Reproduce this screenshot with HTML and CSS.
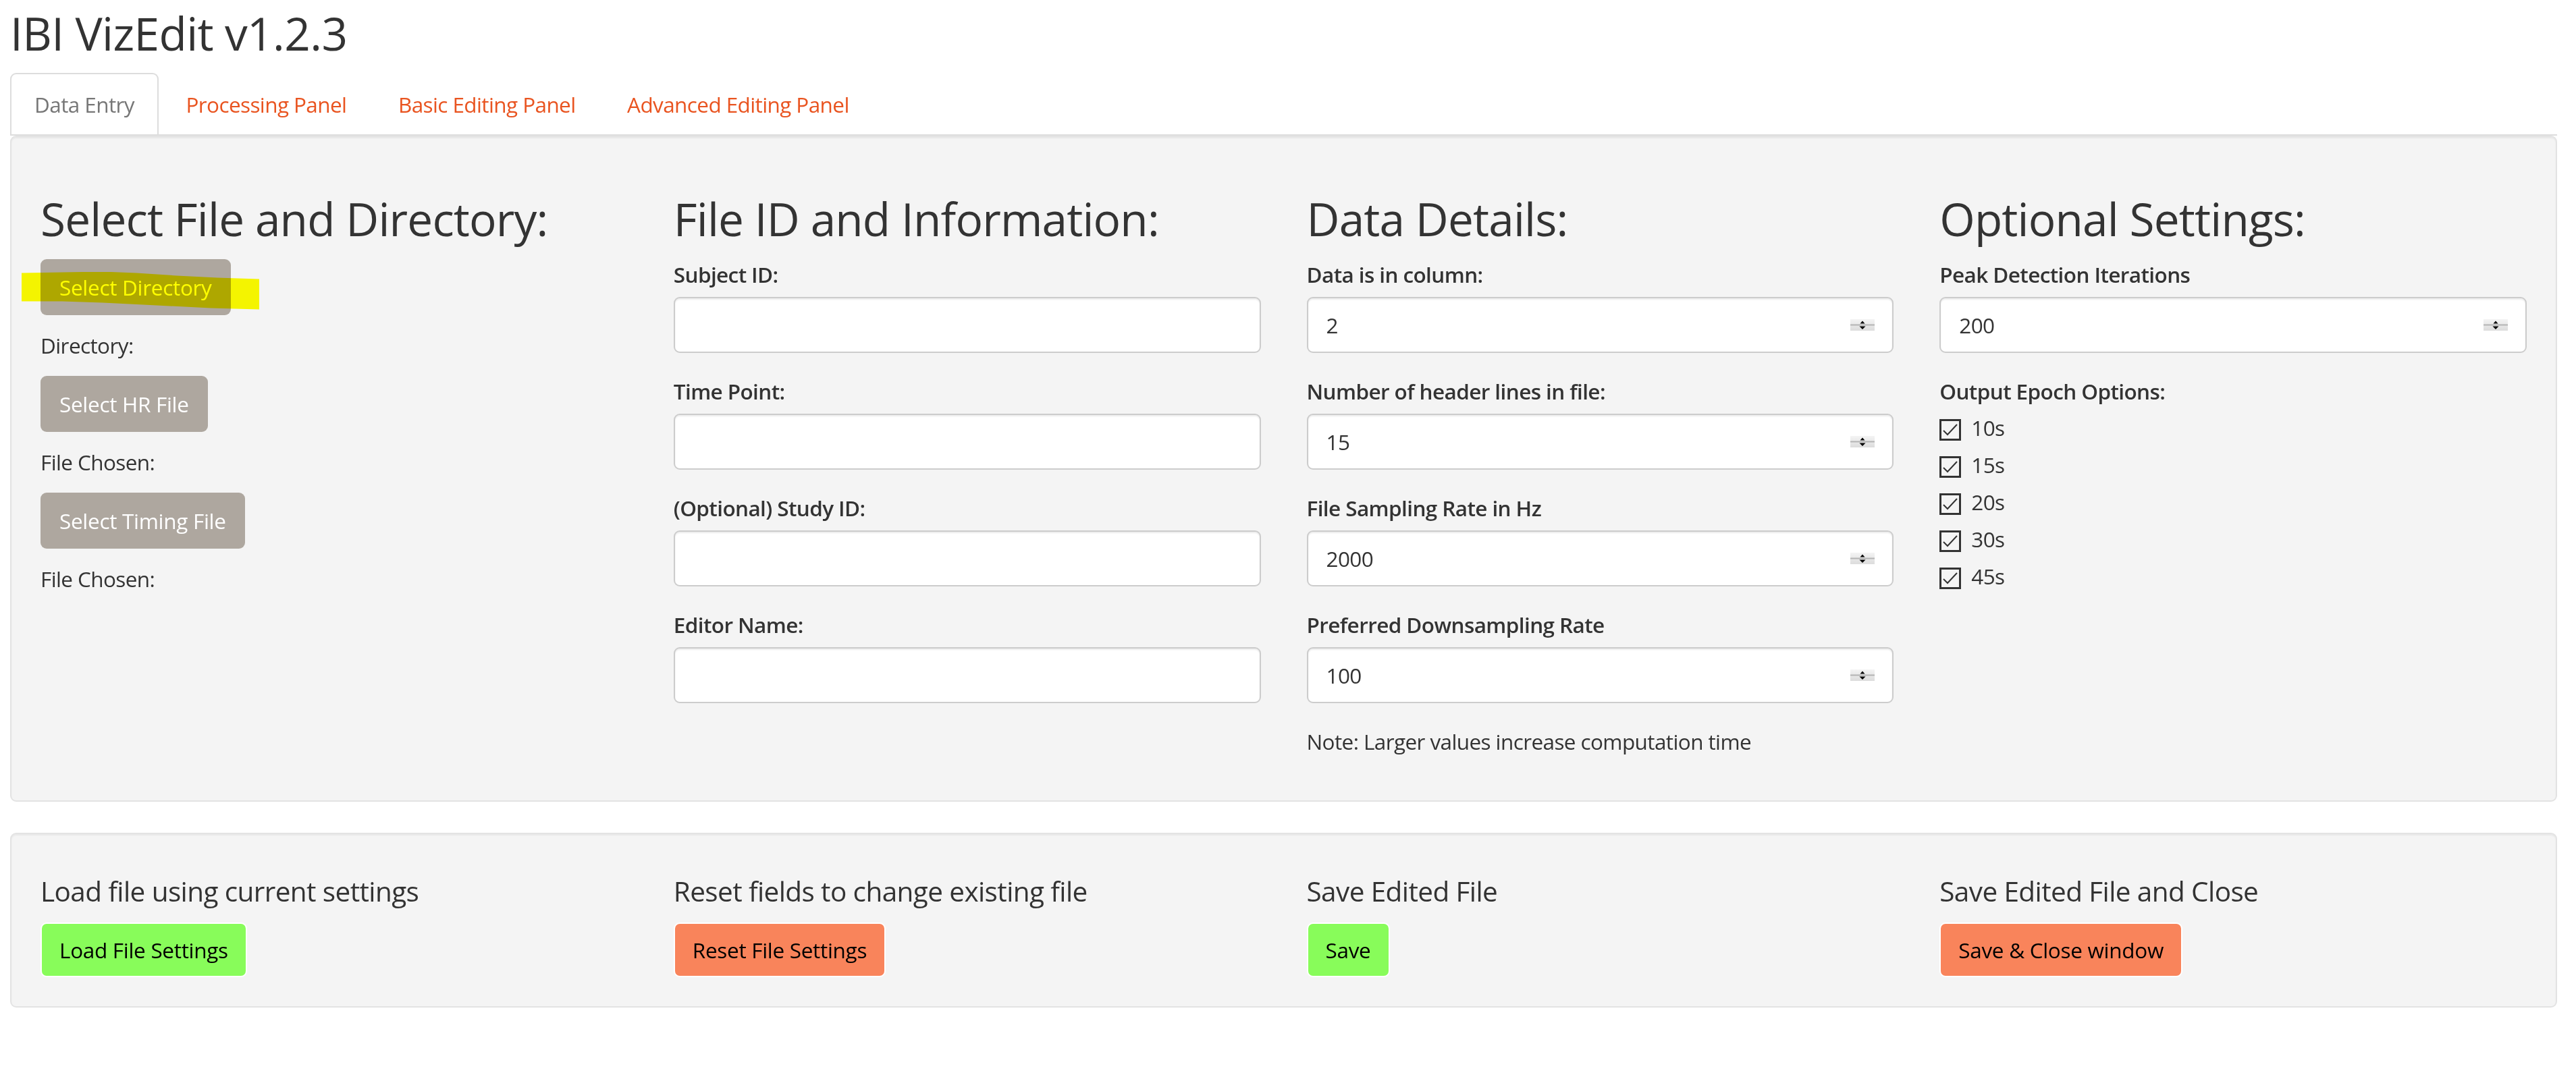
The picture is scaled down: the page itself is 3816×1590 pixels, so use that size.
FILE: index.html
```html
<!DOCTYPE html>
<html lang="en">
<head>
<meta charset="utf-8">
<title>IBI VizEdit v1.2.3</title>
<link rel="stylesheet" href="styles.css">
</head>
<body>
<div class="page">
  <h2 class="title">IBI VizEdit v1.2.3</h2>
  <ul class="tabs">
    <li class="tab active"><a>Data Entry</a></li>
    <li class="tab"><a>Processing Panel</a></li>
    <li class="tab"><a>Basic Editing Panel</a></li>
    <li class="tab"><a>Advanced Editing Panel</a></li>
  </ul>

  <div class="well well-main">
    <div class="grid">
      <div class="col col-files">
        <h2 class="sec">Select File and Directory:</h2>
        <div class="btn-wrap">
          <button class="btn btn-grey">Select Directory</button>
          <span class="marker"></span>
        </div>
        <div class="out">Directory:</div>
        <button class="btn btn-grey">Select HR File</button>
        <div class="out">File Chosen:</div>
        <button class="btn btn-grey">Select Timing File</button>
        <div class="out">File Chosen:</div>
      </div>

      <div class="col">
        <h2 class="sec">File ID and Information:</h2>
        <div class="group"><label class="lbl">Subject ID:</label><div class="field"><input class="inp" type="text"></div></div>
        <div class="group"><label class="lbl">Time Point:</label><div class="field"><input class="inp" type="text"></div></div>
        <div class="group"><label class="lbl">(Optional) Study ID:</label><div class="field"><input class="inp" type="text"></div></div>
        <div class="group"><label class="lbl">Editor Name:</label><div class="field"><input class="inp" type="text"></div></div>
      </div>

      <div class="col">
        <h2 class="sec">Data Details:</h2>
        <div class="group"><label class="lbl">Data is in column:</label><div class="field"><input class="inp" type="text" value="2"><svg class="spin" width="36" height="17" viewBox="0 0 36 17"><defs><linearGradient id="sg1" x1="0" y1="0" x2="0" y2="1"><stop offset="0" stop-color="#f4f4f4"/><stop offset="1" stop-color="#dcdcdc"/></linearGradient></defs><rect width="36" height="17" fill="url(#sg1)"/><rect x="0" y="7.5" width="36" height="2" fill="#b4b4b4"/><polygon points="18,2.5 14.5,6.5 21.5,6.5" fill="#000"/><polygon points="13.5,10.5 22.5,10.5 18,15" fill="#000"/></svg></div></div>
        <div class="group"><label class="lbl">Number of header lines in file:</label><div class="field"><input class="inp" type="text" value="15"><svg class="spin" width="36" height="17" viewBox="0 0 36 17"><rect width="36" height="17" fill="url(#sg1)"/><rect x="0" y="7.5" width="36" height="2" fill="#b4b4b4"/><polygon points="18,2.5 14.5,6.5 21.5,6.5" fill="#000"/><polygon points="13.5,10.5 22.5,10.5 18,15" fill="#000"/></svg></div></div>
        <div class="group"><label class="lbl">File Sampling Rate in Hz</label><div class="field"><input class="inp" type="text" value="2000"><svg class="spin" width="36" height="17" viewBox="0 0 36 17"><rect width="36" height="17" fill="url(#sg1)"/><rect x="0" y="7.5" width="36" height="2" fill="#b4b4b4"/><polygon points="18,2.5 14.5,6.5 21.5,6.5" fill="#000"/><polygon points="13.5,10.5 22.5,10.5 18,15" fill="#000"/></svg></div></div>
        <div class="group"><label class="lbl">Preferred Downsampling Rate</label><div class="field"><input class="inp" type="text" value="100"><svg class="spin" width="36" height="17" viewBox="0 0 36 17"><rect width="36" height="17" fill="url(#sg1)"/><rect x="0" y="7.5" width="36" height="2" fill="#b4b4b4"/><polygon points="18,2.5 14.5,6.5 21.5,6.5" fill="#000"/><polygon points="13.5,10.5 22.5,10.5 18,15" fill="#000"/></svg></div></div>
        <p class="note">Note: Larger values increase computation time</p>
      </div>

      <div class="col">
        <h2 class="sec">Optional Settings:</h2>
        <div class="group"><label class="lbl">Peak Detection Iterations</label><div class="field"><input class="inp" type="text" value="200"><svg class="spin" width="36" height="17" viewBox="0 0 36 17"><rect width="36" height="17" fill="url(#sg1)"/><rect x="0" y="7.5" width="36" height="2" fill="#b4b4b4"/><polygon points="18,2.5 14.5,6.5 21.5,6.5" fill="#000"/><polygon points="13.5,10.5 22.5,10.5 18,15" fill="#000"/></svg></div></div>
        <label class="lbl">Output Epoch Options:</label>
        <div class="checks">
          <div class="check"><svg class="cb" width="32" height="32" viewBox="0 0 32 32"><rect x="1.5" y="1.5" width="29" height="29" fill="none" stroke="#333" stroke-width="3"/><polyline points="6,17 12,23 26,8" fill="none" stroke="#333" stroke-width="2"/></svg><span>10s</span></div>
          <div class="check"><svg class="cb" width="32" height="32" viewBox="0 0 32 32"><rect x="1.5" y="1.5" width="29" height="29" fill="none" stroke="#333" stroke-width="3"/><polyline points="6,17 12,23 26,8" fill="none" stroke="#333" stroke-width="2"/></svg><span>15s</span></div>
          <div class="check"><svg class="cb" width="32" height="32" viewBox="0 0 32 32"><rect x="1.5" y="1.5" width="29" height="29" fill="none" stroke="#333" stroke-width="3"/><polyline points="6,17 12,23 26,8" fill="none" stroke="#333" stroke-width="2"/></svg><span>20s</span></div>
          <div class="check"><svg class="cb" width="32" height="32" viewBox="0 0 32 32"><rect x="1.5" y="1.5" width="29" height="29" fill="none" stroke="#333" stroke-width="3"/><polyline points="6,17 12,23 26,8" fill="none" stroke="#333" stroke-width="2"/></svg><span>30s</span></div>
          <div class="check"><svg class="cb" width="32" height="32" viewBox="0 0 32 32"><rect x="1.5" y="1.5" width="29" height="29" fill="none" stroke="#333" stroke-width="3"/><polyline points="6,17 12,23 26,8" fill="none" stroke="#333" stroke-width="2"/></svg><span>45s</span></div>
        </div>
      </div>
    </div>
  </div>

  <div class="well well-actions">
    <div class="grid">
      <div class="col">
        <h4 class="act-title">Load file using current settings</h4>
        <button class="btn btn-act btn-green">Load File Settings</button>
      </div>
      <div class="col">
        <h4 class="act-title">Reset fields to change existing file</h4>
        <button class="btn btn-act btn-coral">Reset File Settings</button>
      </div>
      <div class="col">
        <h4 class="act-title">Save Edited File</h4>
        <button class="btn btn-act btn-green">Save</button>
      </div>
      <div class="col">
        <h4 class="act-title">Save Edited File and Close</h4>
        <button class="btn btn-act btn-coral">Save &amp; Close window</button>
      </div>
    </div>
  </div>
</div>
</body>
</html>
```

FILE: styles.css
```css
* { box-sizing: border-box; }

html, body {
  margin: 0;
  padding: 0;
  background: #ffffff;
}

body {
  font-family: "Open Sans", "Noto Sans", sans-serif;
  font-size: 31.5px;
  line-height: 45px;
  letter-spacing: -0.6px;
  color: #333333;
}

.page {
  padding: 0 28px 0 15px;
}

.title {
  margin: 12px 0 22px 0;
  font-size: 67.5px;
  line-height: 74px;
  font-weight: 400;
  letter-spacing: -0.6px;
  color: #333333;
}

/* tabs */
.tabs {
  list-style: none;
  margin: 0;
  padding: 0;
  display: flex;
  border-bottom: 2px solid #dddddd;
}

.tab a {
  display: block;
  padding: 22px 34px;
  line-height: 45px;
  border: 2px solid transparent;
  border-bottom: 0;
  border-radius: 9px 9px 0 0;
  margin-right: 4.5px;
  color: #e95420;
  white-space: nowrap;
}

.tab.active a {
  background: #ffffff;
  border-color: #dddddd;
  color: #777777;
}

/* wells */
.well {
  background: #f4f4f4;
  border: 2px solid #e3e3e3;
  border-radius: 9px;
  padding: 43px;
  box-shadow: inset 0 2px 2px rgba(0, 0, 0, 0.05);
}

.well-main {
  margin-bottom: 46px;
}

.grid {
  display: grid;
  grid-template-columns: repeat(4, 1fr);
  column-gap: 68px;
}

.col {
  display: flex;
  flex-direction: column;
  align-items: stretch;
  min-width: 0;
}

.sec {
  margin: 41px 0 22.5px 0;
  font-size: 67.5px;
  line-height: 74px;
  font-weight: 400;
  letter-spacing: -0.85px;
  white-space: nowrap;
}

/* column 1 */
.col-files {
  align-items: flex-start;
}

.btn-wrap {
  position: relative;
}

.btn {
  font-family: inherit;
  font-size: 31.5px;
  line-height: 45px;
  letter-spacing: -0.3px;
  border-radius: 9px;
  cursor: pointer;
  display: inline-flex;
  align-items: center;
  white-space: nowrap;
}

.btn-grey {
  height: 83px;
  padding: 0 28px;
  border: 0;
  background: #aea79f;
  color: #ffffff;
}

.out {
  margin: 22px 0 23px 0;
}

.marker {
  position: absolute;
  left: -28px;
  top: 19px;
  width: 352px;
  height: 56px;
  background: #ffff00;
  mix-blend-mode: multiply;
  clip-path: polygon(0 2px, 60px 1px, 120px 0, 170px 2px, 230px 6px, 290px 9px, 352px 11px, 352px 56px, 280px 54px, 200px 50px, 120px 46px, 60px 44px, 0 44px);
  pointer-events: none;
}

/* form groups */
.group {
  margin-bottom: 33.5px;
}

.lbl {
  display: block;
  font-weight: 600;
  margin-bottom: 11.5px;
  white-space: nowrap;
}

.field {
  height: 83px;
  display: flex;
  align-items: center;
  background: #ffffff;
  border: 2px solid #cccccc;
  border-radius: 9px;
  padding: 0 26px 0 27px;
  box-shadow: inset 0 2px 2px rgba(0, 0, 0, 0.075);
}

.inp {
  flex: 1;
  min-width: 0;
  border: 0;
  outline: 0;
  background: transparent;
  padding: 0;
  font-family: inherit;
  font-size: 31.5px;
  letter-spacing: -0.6px;
  color: #333333;
}

.spin {
  flex: none;
  display: block;
}

.note {
  margin: 0 0 22px 0;
  white-space: nowrap;
}

/* checkboxes */
.checks {
  margin-top: -2.5px;
  display: flex;
  flex-direction: column;
  gap: 10px;
}

.check {
  display: flex;
  align-items: flex-start;
  gap: 15px;
}

.cb {
  flex: none;
  margin-top: 10px;
}

/* action well */
.act-title {
  margin: 20px 0 23.5px 0;
  font-size: 40.5px;
  line-height: 44.5px;
  font-weight: 400;
  letter-spacing: -0.6px;
  white-space: nowrap;
}

.btn-act {
  align-self: flex-start;
  height: 81px;
  padding: 0 26px;
  border: 2px solid #ffffff;
  color: #000000;
}

.btn-green {
  background: #88fc5a;
}

.btn-coral {
  background: #f9845b;
}
```
